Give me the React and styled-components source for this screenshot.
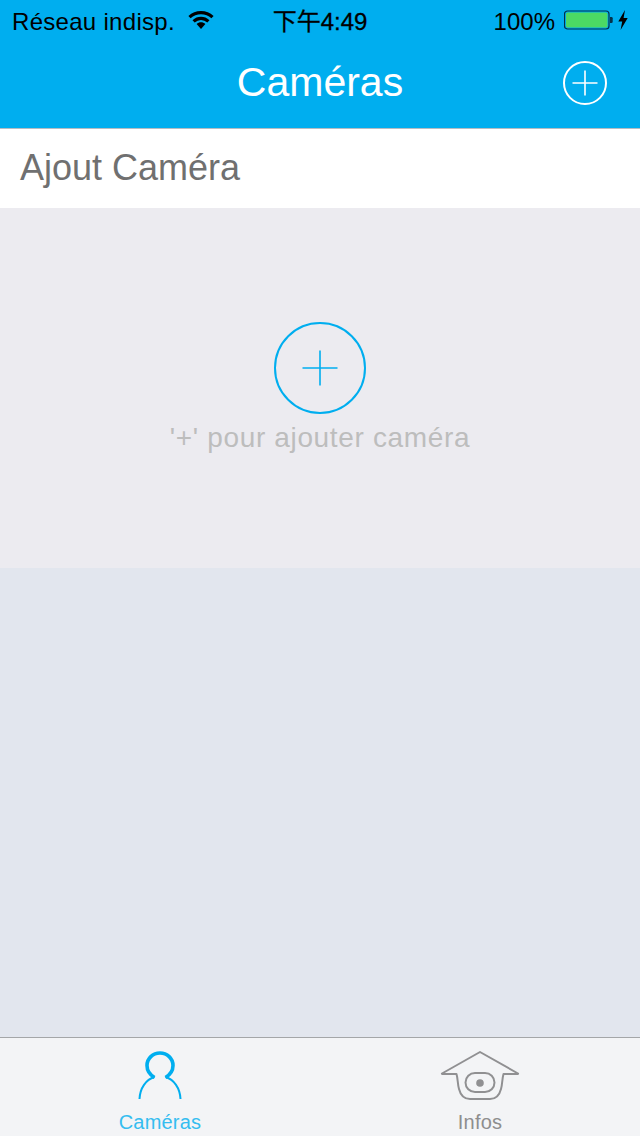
import React from "react";
import styled, { createGlobalStyle } from "styled-components";

const Global = createGlobalStyle`
  html, body { margin: 0; padding: 0; background: #e2e6ee; }
  * { box-sizing: border-box; }
`;

const Screen = styled.div`
  width: 640px;
  height: 1136px;
  display: flex;
  flex-direction: column;
  overflow: hidden;
  font-family: "Liberation Sans", Arial, sans-serif;
  background: #e2e6ee;
`;

const Header = styled.header`
  height: 129px;
  flex: none;
  background: #00aeef;
  border-bottom: 1px solid #b4bcc4;
  display: flex;
  flex-direction: column;
`;

const StatusBar = styled.div`
  height: 40px;
  padding: 3px 12px 0;
  display: grid;
  grid-template-columns: 1fr auto 1fr;
  align-items: center;
  color: #000;
  font-size: 24px;
  line-height: 32px;
`;

const StatusLeft = styled.div`
  display: flex;
  align-items: center;
  gap: 13px;
  letter-spacing: 0.3px;
`;

const StatusClock = styled.div`
  font-family: "Liberation Sans", "Noto Sans CJK TC", sans-serif;
  font-size: 24px;
  white-space: nowrap;
  height: 32px;
  -webkit-text-stroke: 0.3px #000;
`;

const StatusRight = styled.div`
  display: flex;
  align-items: center;
  justify-content: flex-end;
`;

const BatteryLevel = styled.span`
  margin-right: 9px;
`;

const StatusGlyph = styled.span`
  display: flex;
  margin-bottom: 4px;
  margin-left: ${(p) => p.$left || 0}px;
`;

const NavBar = styled.div`
  flex: 1;
  position: relative;
  display: flex;
  align-items: center;
  justify-content: center;
  padding-bottom: 4px;
`;

const NavTitle = styled.h1`
  margin: 0;
  font-weight: 400;
  font-size: 41px;
  color: #fff;
`;

const NavAction = styled.div`
  position: absolute;
  right: 33px;
  top: 21px;
  width: 44px;
  height: 44px;
`;

const SectionRow = styled.div`
  height: 79px;
  flex: none;
  background: #fff;
  display: flex;
  align-items: center;
  padding: 0 0 2px 20px;
  font-size: 36px;
  color: #707070;
`;

const EmptyCard = styled.section`
  height: 360px;
  flex: none;
  background: #ecebf0;
  display: flex;
  flex-direction: column;
  align-items: center;
  padding-top: 114px;
`;

const EmptyHint = styled.div`
  font-size: 28px;
  color: #bdbdbd;
  margin-top: 8px;
  letter-spacing: 0.65px;
`;

const Filler = styled.div`
  flex: 1;
  background: #e2e6ee;
`;

const TabBar = styled.nav`
  height: 99px;
  flex: none;
  background: #f3f4f6;
  border-top: 1px solid #a4a6a8;
  display: grid;
  grid-template-columns: 1fr 1fr;
`;

const Tab = styled.div`
  display: flex;
  flex-direction: column;
  align-items: center;
  padding-top: 13px;
  color: ${(p) => (p.$active ? "#35bdf0" : "#8e8e8e")};
  font-size: 20px;
  line-height: 24px;
  letter-spacing: 0.2px;
`;

const TabIcon = styled.div`
  height: 50px;
  margin-bottom: 9px;
  display: flex;
  justify-content: center;
`;

function Wifi() {
  return (
    <svg width="26" height="20" viewBox="0 0 26 20">
      <path d="M1.5 7.2C8 1 18 1 24.5 7.2" fill="none" stroke="#000" strokeWidth="3.2" />
      <path d="M5.6 11.4C10 7.4 16 7.4 20.4 11.4" fill="none" stroke="#000" strokeWidth="3.2" />
      <path d="M8.6 14C11 11.8 15 11.8 17.4 14L13 19Z" fill="#000" />
    </svg>
  );
}

function Battery() {
  return (
    <svg width="49" height="20" viewBox="0 0 49 20">
      <rect x="0.5" y="1" width="44.5" height="18" rx="3" fill="none" stroke="#05324a" strokeWidth="1.2" />
      <rect x="2" y="2.5" width="41.5" height="15" rx="1.5" fill="#4cd964" />
      <path d="M46 7h1.5a1.2 1.2 0 0 1 1.2 1.2v3.6a1.2 1.2 0 0 1-1.2 1.2H46Z" fill="#05324a" />
    </svg>
  );
}

function Bolt() {
  return (
    <svg width="10" height="20" viewBox="0 0 10 20">
      <path d="M7 0L0.3 11.4H4.2L2.6 20L9.7 8H5.6Z" fill="#000" />
    </svg>
  );
}

function PlusCircle({ size, color, stroke, arm, plusStroke }) {
  const c = size / 2;
  return (
    <svg width={size} height={size} viewBox={`0 0 ${size} ${size}`}>
      <circle cx={c} cy={c} r={c - 1} fill="none" stroke={color} strokeWidth={stroke} />
      <path d={`M${c - arm} ${c}H${c + arm}M${c} ${c - arm}V${c + arm}`} stroke={color} strokeWidth={plusStroke} fill="none" />
    </svg>
  );
}

function PersonIcon() {
  return (
    <svg width="46" height="50" viewBox="0 0 46 50">
      <path
        d="M17.5 26.5C12.5 23.5 10 19 10 14.5A13 12.5 0 0 1 36 14.5C36 19 33.5 23.5 28.5 26.5"
        fill="none"
        stroke="#00aeef"
        strokeWidth="3.6"
      />
      <path d="M17.5 26C9 28.5 3 37 2.5 48M28.5 26C37 28.5 43 37 43.5 48" fill="none" stroke="#00aeef" strokeWidth="2" />
    </svg>
  );
}

function InfoIcon() {
  return (
    <svg width="80" height="50" viewBox="0 0 80 50">
      <path
        d="M40 1L2 22.5Q1.5 23 3 23H16.5C18 28 17.5 33 19 38C20.5 44 24 48 30 48H50C56 48 59.5 44 61 38C62.5 33 62 28 63.5 23H77Q78.5 23 78 22.5Z"
        fill="none"
        stroke="#909092"
        strokeWidth="2"
        strokeLinejoin="round"
      />
      <rect x="25.5" y="22" width="29" height="19" rx="9.5" fill="none" stroke="#909092" strokeWidth="2" />
      <circle cx="40" cy="32" r="3.8" fill="#909092" />
    </svg>
  );
}

export default function App() {
  return (
    <Screen>
      <Global />
      <Header>
        <StatusBar>
          <StatusLeft>
            <span>Réseau indisp.</span>
            <StatusGlyph>
              <Wifi />
            </StatusGlyph>
          </StatusLeft>
          <StatusClock>下午4:49</StatusClock>
          <StatusRight>
            <BatteryLevel>100%</BatteryLevel>
            <StatusGlyph>
              <Battery />
            </StatusGlyph>
            <StatusGlyph $left={5}>
              <Bolt />
            </StatusGlyph>
          </StatusRight>
        </StatusBar>
        <NavBar>
          <NavTitle>Caméras</NavTitle>
          <NavAction>
            <PlusCircle size={44} color="#fff" stroke={2} plusStroke={1.6} arm={12.5} />
          </NavAction>
        </NavBar>
      </Header>
      <SectionRow>Ajout Caméra</SectionRow>
      <EmptyCard>
        <PlusCircle size={92} color="#00aeef" stroke={2} plusStroke={1.6} arm={17.5} />
        <EmptyHint>'+' pour ajouter caméra</EmptyHint>
      </EmptyCard>
      <Filler />
      <TabBar>
        <Tab $active>
          <TabIcon>
            <PersonIcon />
          </TabIcon>
          <span>Caméras</span>
        </Tab>
        <Tab>
          <TabIcon>
            <InfoIcon />
          </TabIcon>
          <span>Infos</span>
        </Tab>
      </TabBar>
    </Screen>
  );
}
